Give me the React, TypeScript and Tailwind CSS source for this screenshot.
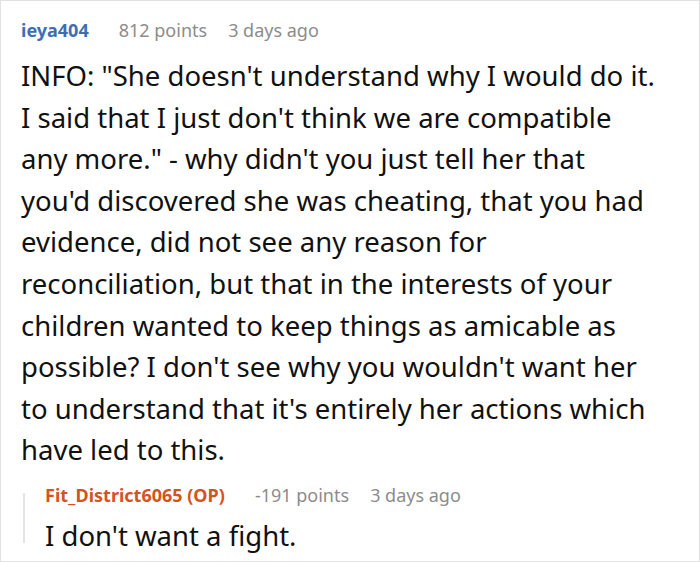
import React from "react";

const font = { fontFamily: '"Noto Sans", "Open Sans", sans-serif' };

export default function App() {
    return (
        <div
            className="w-[700px] h-[562px] bg-white border border-[#e2e2e2] overflow-hidden"
            style={font}
        >
            <div className="pl-[20px] pr-[43px] pt-[15px]">
                {/* Comment header */}
                <div className="flex items-center text-[18px] leading-[28px]">
                    <span className="font-bold text-[#3d6eb4]">ieya404</span>
                    <span className="ml-[30px] text-[#8c8c8c]">812 points</span>
                    <span className="ml-[21px] text-[#8c8c8c]">3 days ago</span>
                </div>

                {/* Body */}
                <p className="mt-[11px] text-[27.5px] leading-[41.6px] text-[#111]">
                    INFO: "She doesn't understand why I would do it. I said that I just
                    don't think we are compatible any more." - why didn't you just tell her
                    that you'd discovered she was cheating, that you had evidence, did not
                    see any reason for reconciliation, but that in the interests of your
                    children wanted to keep things as amicable as possible? I don't see why
                    you wouldn't want her to understand that it's entirely her actions
                    which have led to this.
                </p>

                {/* Reply */}
                <div className="mt-[10px] flex">
                    <div className="mt-[12px] mb-[14px] ml-[2px] w-[2px] shrink-0 bg-[#e4e4e4]" />
                    <div className="pl-[20px]">
                        <div className="flex items-center text-[18px] leading-[28px]">
                            <span className="font-bold text-[#d4531f]">
                                Fit_District6065 (OP)
                            </span>
                            <span className="ml-[30px] text-[#8c8c8c]">-191 points</span>
                            <span className="ml-[21px] text-[#8c8c8c]">3 days ago</span>
                        </div>
                        <p className="mt-[6px] text-[27.5px] leading-[41.6px] text-[#111]">
                            I don't want a fight.
                        </p>
                    </div>
                </div>
            </div>
        </div>
    );
}
